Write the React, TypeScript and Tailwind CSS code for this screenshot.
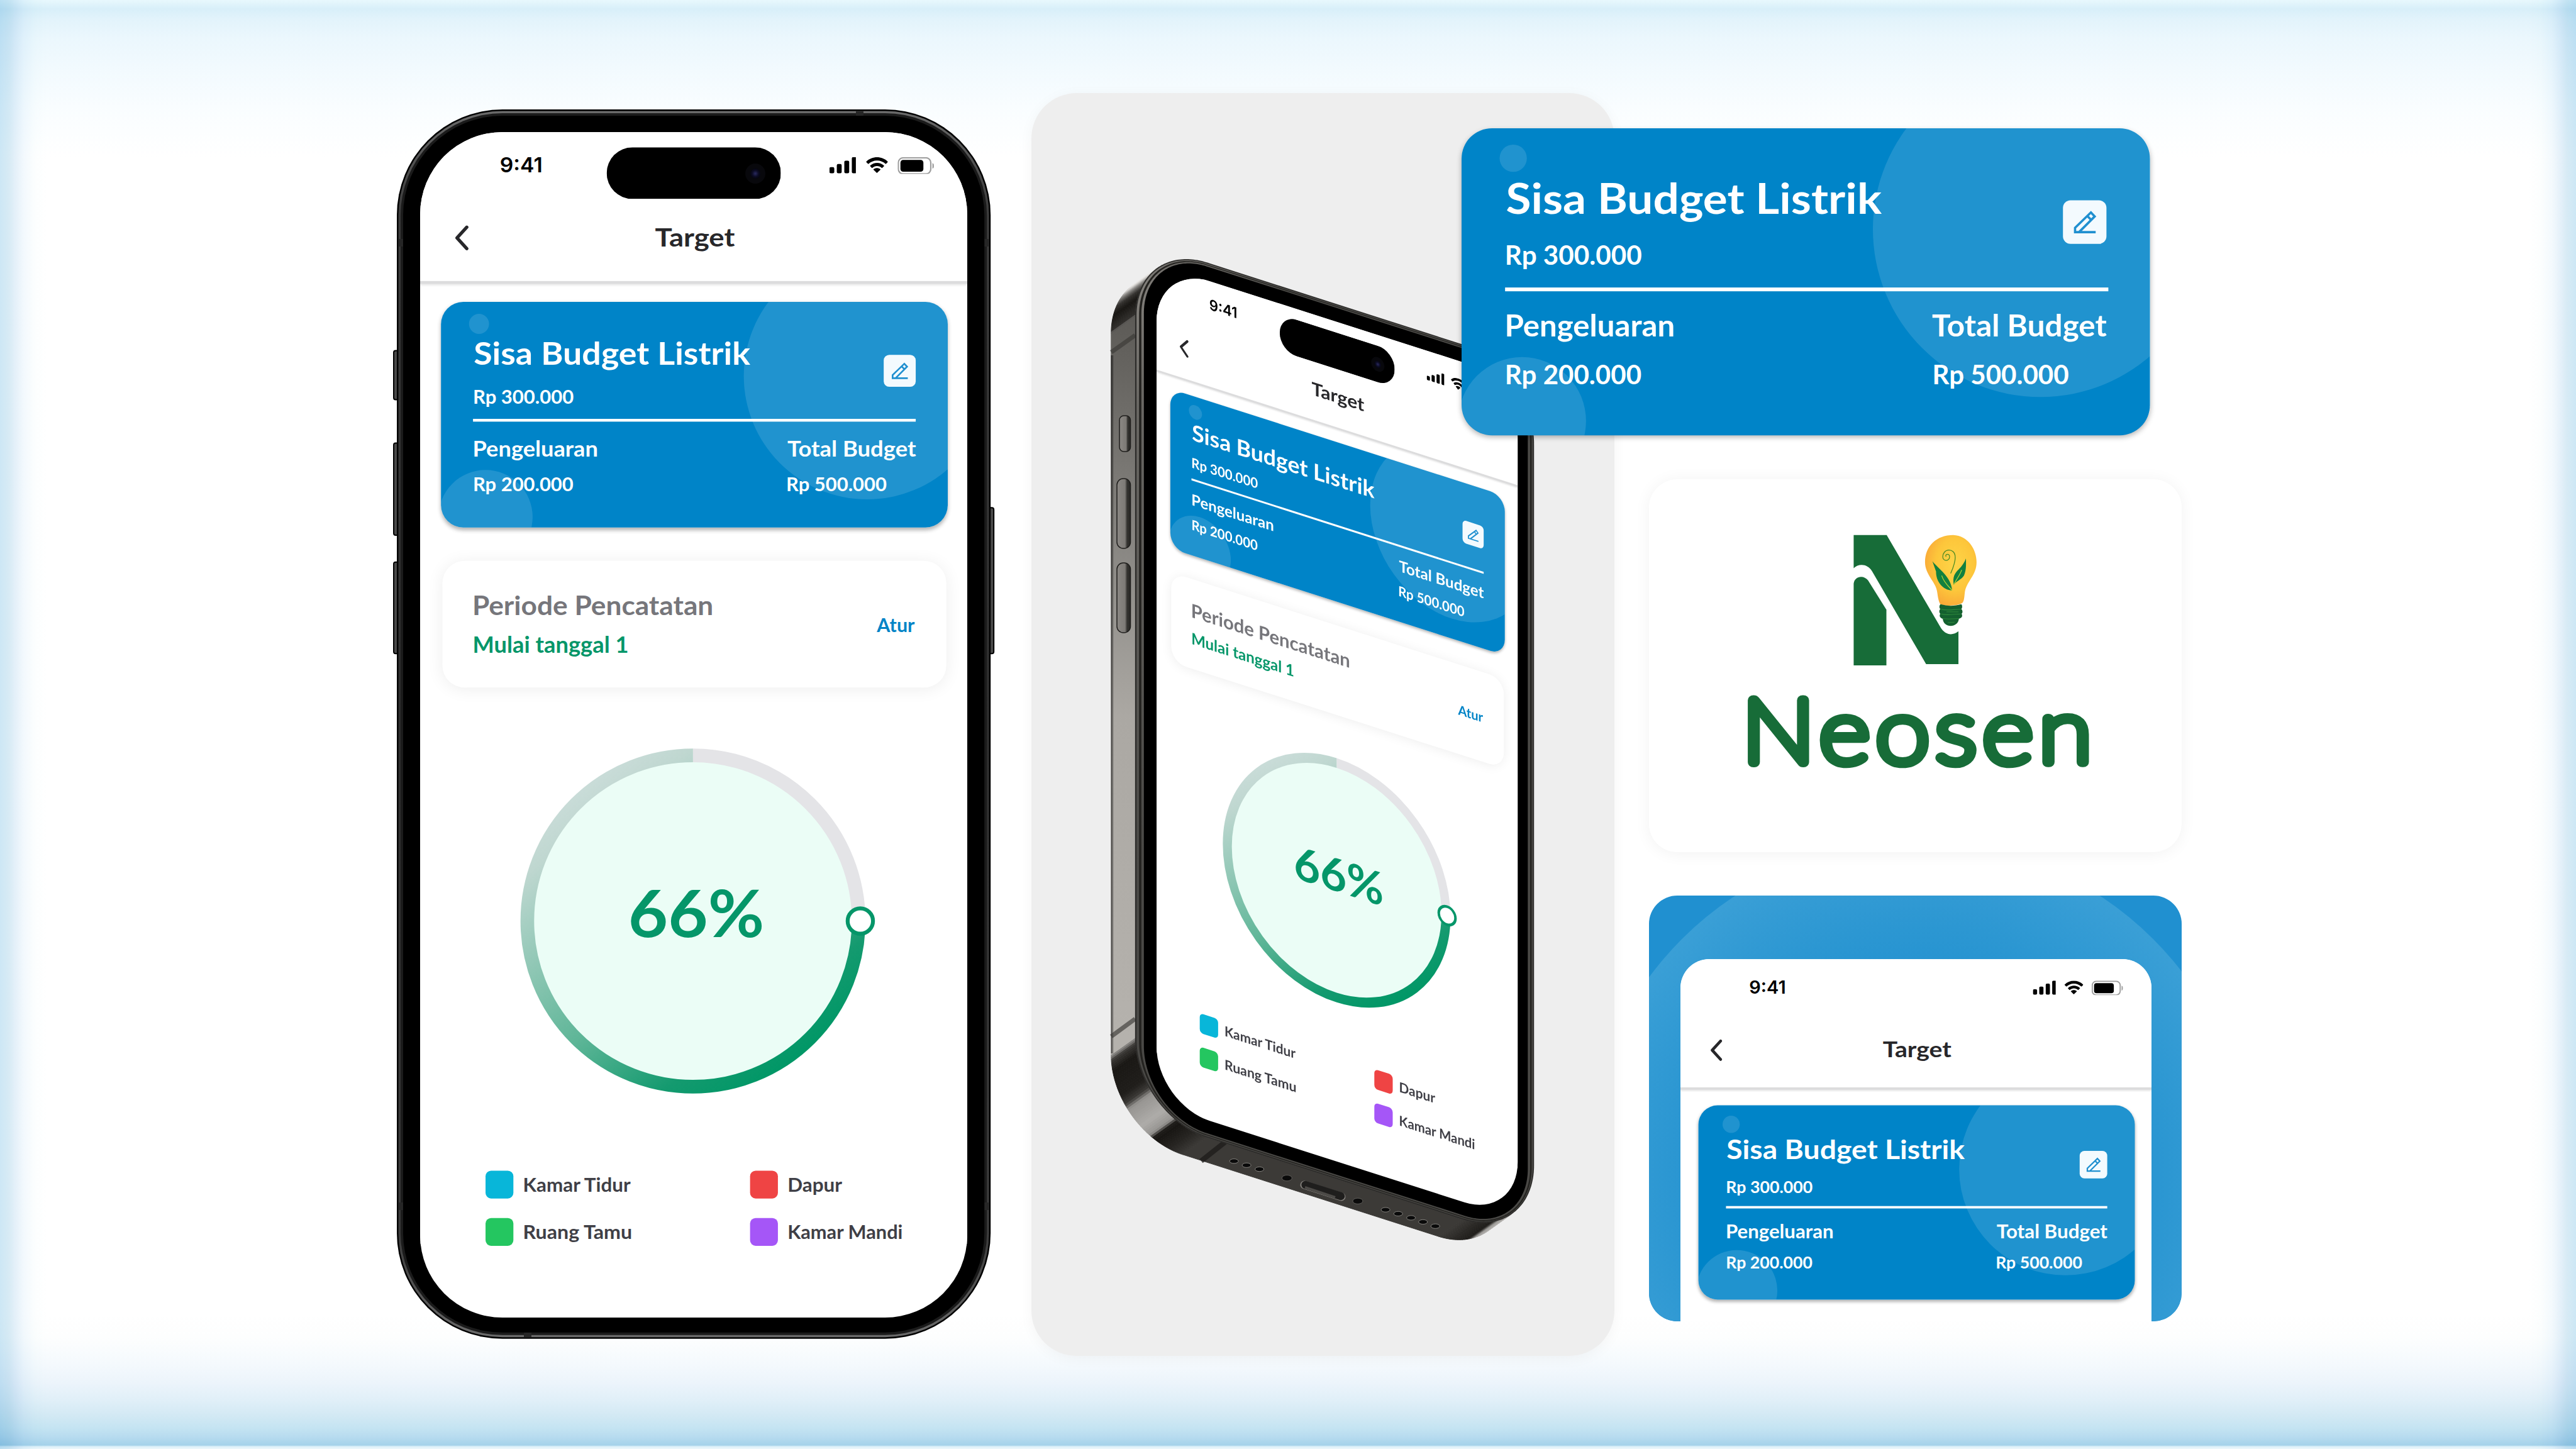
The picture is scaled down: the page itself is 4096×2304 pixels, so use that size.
import { useLayoutEffect, useRef, useState } from "react";

/* A line of text whose ink spans exactly `w` design pixels. */
function Fit({ w, text, className = "" }: { w: number; text: string; className?: string }) {
  const ref = useRef<HTMLSpanElement>(null);
  const [transform, setTransform] = useState("none");
  useLayoutEffect(() => {
    const el = ref.current;
    const ctx = document.createElement("canvas").getContext("2d");
    if (!el || !ctx) return;
    const cs = getComputedStyle(el);
    ctx.font = `${cs.fontWeight} ${parseFloat(cs.fontSize) * 10}px ${cs.fontFamily}`;
    const m = ctx.measureText(text);
    const left = m.actualBoundingBoxLeft / 10;
    const s = w / (left + m.actualBoundingBoxRight / 10);
    setTransform(`translateX(${left * s}px) scaleX(${s})`);
  }, [w, text]);
  return (
    <span ref={ref} className={`block origin-left whitespace-nowrap ${className}`} style={{ width: w, transform }}>
      {text}
    </span>
  );
}

function BudgetCard() {
  return (
    <div className="relative h-[161.7px] w-[364.3px] overflow-hidden rounded-[16px] bg-[#0084c8] pl-[23.2px] pr-[22.7px] pt-[22.6px] text-white">
      <svg viewBox="0 0 364.3 161.7" className="absolute inset-0 h-full w-full" fill="#fff" fillOpacity="0.125">
        <circle cx="27.3" cy="15.8" r="7.2" />
        <circle cx="306.1" cy="53.2" r="88.6" />
        <circle cx="32" cy="154.5" r="33.8" />
      </svg>
      <div className="relative flex items-start justify-between">
        <div className="pl-[0.7px]">
          <Fit w={198.2} text="Sisa Budget Listrik" className="text-[22.5px] font-bold leading-[28px]" />
          <Fit w={71} text="Rp 300.000" className="mt-[7.8px] text-[14px] font-bold leading-[18px]" />
        </div>
        <div className="mr-[0.4px] mt-[15.4px] h-[23px] w-[23px] rounded-[4px] bg-[#f3fafe]">
          <svg viewBox="0 0 23 23" className="h-full w-full" fill="none" stroke="#2090d0" strokeWidth="1.2">
            <path d="M17.3 16.8H6.4V14.5L14.8 6.4L16.8 8.5L8.5 16.8M12.9 8.3L15 10.4" />
          </svg>
        </div>
      </div>
      <div className="relative mt-[7.2px] h-[2px] bg-white" />
      <div className="relative mt-[8.7px] flex justify-between pl-[0.7px]">
        <div>
          <Fit w={88} text="Pengeluaran" className="text-[15.6px] font-bold leading-[20px]" />
          <Fit w={70.8} text="Rp 200.000" className="mt-[7.2px] text-[14px] font-bold leading-[18px]" />
        </div>
        <div>
          <Fit w={92.2} text="Total Budget" className="text-[15.6px] font-bold leading-[20px]" />
          <Fit w={70.8} text="Rp 500.000" className="ml-[0.3px] mt-[7.2px] text-[14px] font-bold leading-[18px]" />
        </div>
      </div>
    </div>
  );
}

function StatusIcons() {
  return (
    <div className="flex h-[18.6px] items-center gap-[6.4px]">
      <svg viewBox="0 0 19.6 11.6" className="h-[11.6px] w-[19.6px]">
        <rect x="0" y="7.2" width="3.5" height="4.4" rx="1" />
        <rect x="5.3" y="4.9" width="3.5" height="6.7" rx="1" />
        <rect x="10.7" y="2.5" width="3.5" height="9.1" rx="1" />
        <rect x="16.1" y="0" width="3.5" height="11.6" rx="1" />
      </svg>
      <svg viewBox="0 0 17 12" className="h-[11.6px] w-[16.4px]">
        <path d="M8.5 2.5c2.4 0 4.6.9 6.3 2.5.1.1.3.1.4 0L16.500 3.700c.1-.1.1-.3 0-.4C12-1 5-1 .5 3.300c-.1.1-.1.3 0 .4L1.800 5c.1.1.3.1.4 0C3.900 3.400 6.100 2.500 8.500 2.500Z" />
        <path d="M8.500 6.600c1.300 0 2.600.5 3.500 1.400.1.1.3.1.4 0l1.300-1.300c.1-.1.1-.3 0-.4-2.900-2.700-7.400-2.700-10.300 0-.1.1-.1.300 0 .4L4.600 8c.1.1.3.1.4 0 1-.9 2.200-1.400 3.500-1.400Z" />
        <path d="M11 9.400c.1-.1.1-.3 0-.4-1.500-1.200-3.600-1.200-5.100 0-.1.1-.1.300 0 .4l2.300 2.300c.1.100.3.100.4 0L11 9.400Z" />
      </svg>
      <svg viewBox="0 0 26.500 12.500" className="h-[12.5px] w-[26.5px]">
        <rect x="0.500" y="0.500" width="23.300" height="11.500" rx="3.400" fill="none" stroke="#000" strokeOpacity="0.38" />
        <rect x="2" y="2" width="16.500" height="8.500" rx="2" />
        <path d="M25 4.200v4.100c.8-.35 1.300-1.150 1.300-2.050S25.800 4.550 25 4.200Z" fillOpacity="0.4" />
      </svg>
    </div>
  );
}

function Ring() {
  return (
    <div className="relative ml-[72.1px] mt-[43.2px] flex h-[248px] w-[248px] justify-center pl-[4px] pt-[88.9px]">
      <svg viewBox="0 0 248 248" className="absolute inset-0 h-full w-full overflow-visible">
        <defs>
          <linearGradient id="ringFade" gradientUnits="userSpaceOnUse" x1="49.600" y1="24.800" x2="198.400" y2="223.200">
            <stop offset="0" stopColor="#c9dcd8" />
            <stop offset="0.1" stopColor="#bfd7d0" />
            <stop offset="0.2" stopColor="#a9d0c4" />
            <stop offset="0.57" stopColor="#5fb698" />
            <stop offset="0.84" stopColor="#149a6f" />
            <stop offset="1" stopColor="#009766" />
          </linearGradient>
        </defs>
        <circle cx="124" cy="123.700" r="115" fill="#ebfdf6" />
        <path d="M124 4.700A119 119 0 0 1 243 123.700" fill="none" stroke="#e4e4e7" strokeWidth="9.800" />
        <path d="M243 123.700A119 119 0 1 1 124 4.700" fill="none" stroke="url(#ringFade)" strokeWidth="9.800" />
        <circle cx="244.200" cy="123.700" r="9.100" fill="#fff" stroke="#059669" strokeWidth="2.800" />
      </svg>
      <Fit w={94.3} text="66%" className="relative text-[46.5px] font-bold leading-[56px] text-[#059669]" />
    </div>
  );
}

const legend = [
  { name: "Kamar Tidur", w: 76.9, color: "bg-[#08b6d9]" },
  { name: "Dapur", w: 38.1, color: "bg-[#ef4444]" },
  { name: "Ruang Tamu", w: 76.9, color: "bg-[#24c660]" },
  { name: "Kamar Mandi", w: 81.3, color: "bg-[#a556f7]" },
];

function Screen({ island = true, body = true }: { island?: boolean; body?: boolean }) {
  return (
    <div className="relative w-[393px] bg-white font-[Lato,sans-serif]">
      {island && (
        <svg viewBox="0 0 125.2 37" className="absolute left-[134px] top-[11.1px] h-[37px] w-[125.2px]">
          <defs>
            <radialGradient id="lens">
              <stop offset="0" stopColor="#2a2a60" />
              <stop offset="0.6" stopColor="#0c0c24" />
              <stop offset="1" stopColor="#050510" />
            </radialGradient>
          </defs>
          <rect width="125.2" height="37" rx="18.5" />
          <circle cx="106.8" cy="18.8" r="7.2" fill="#08080c" />
          <circle cx="106.8" cy="18.8" r="3.7" fill="url(#lens)" />
        </svg>
      )}
      <div className="flex h-[54px] items-start justify-between pl-[57.6px] pr-[23.9px] pt-[14.6px]">
        <Fit w={28.9} text="9:41" className="font-[Inter,sans-serif] text-[15px] font-semibold leading-[18px] text-black" />
        <StatusIcons />
      </div>
      <div className="grid h-[53px] grid-cols-[1fr_auto_1fr] items-start pt-[8.8px]">
        <svg viewBox="0 0 10 18" className="ml-[25.4px] mt-[4px] h-[18px] w-[10px]" fill="none" stroke="#27272a" strokeWidth="2.400" strokeLinecap="round" strokeLinejoin="round">
          <path d="M8.500 1.300L1.500 9L8.500 16.700" />
        </svg>
        <Fit w={57} text="Target" className="ml-[2px] text-[18.2px] font-bold leading-[24px] text-[#27272a]" />
      </div>
      <div className="h-[1.5px] bg-[#dcdcdd] shadow-[0_1px_1.5px_rgba(0,0,0,0.1)]" />
      <div className="mt-[13.8px] flex flex-col items-center pr-[0.2px] pl-[1px]">
        <div className="rounded-[16px] shadow-[0_1.5px_3px_rgba(0,0,0,0.3)]">
          <BudgetCard />
        </div>
        {body && (
          <div className="mt-[23.9px] flex h-[91.6px] w-[362.3px] items-start justify-between rounded-[16px] bg-white pl-[23px] pr-[22.4px] shadow-[0_1px_12px_rgba(0,0,0,0.07)]">
            <div className="pt-[19px]">
              <Fit w={170.8} text="Periode Pencatatan" className="text-[19.3px] font-bold leading-[26px] text-[#76767b]" />
              <Fit w={109.8} text="Mulai tanggal 1" className="mt-[4.5px] text-[16px] font-bold leading-[22px] text-[#059669]" />
            </div>
            <Fit w={27.3} text="Atur" className="mt-[36.7px] text-[13.6px] font-bold leading-[18px] text-[#0284c7]" />
          </div>
        )}
      </div>
      {body && <Ring />}
      {body && (
        <div className="ml-[47.1px] mt-[55.6px] grid grid-cols-[190px_120px] gap-y-[14.8px]">
          {legend.map((l) => (
            <div key={l.name} className="flex h-[19.4px] items-start gap-[8.3px]">
              <div className={`h-[19.4px] w-[19.6px] rounded-[4px] ${l.color}`} />
              <Fit w={l.w} text={l.name} className="mt-[0.5px] text-[14px] font-bold leading-[18px] text-[#3f3f46]" />
            </div>
          ))}
        </div>
      )}
    </div>
  );
}

function FrontPhone() {
  return (
    <div className="relative mt-[174.2px] h-[1954.8px] w-[944.2px] shrink-0">
      <svg viewBox="0 0 944.2 1954.8" className="absolute inset-0 h-full w-full overflow-visible">
        <defs>
          <linearGradient id="band" x1="0" y1="0" x2="0" y2="1">
            <stop offset="0" stopColor="#6a6a6a" />
            <stop offset="0.08" stopColor="#3c3c3c" />
            <stop offset="0.5" stopColor="#2e2e2e" />
            <stop offset="0.92" stopColor="#3c3c3c" />
            <stop offset="1" stopColor="#6a6a6a" />
          </linearGradient>
        </defs>
        <g fill="#4a4a4a" stroke="#000" strokeWidth="2">
          <rect x="-5" y="383.600" width="12" height="78" rx="3" />
          <rect x="-5" y="530.400" width="12" height="146.500" rx="3" />
          <rect x="-5" y="719.800" width="12" height="145.500" rx="3" />
          <rect x="937.200" y="633.200" width="12" height="232" rx="3" />
        </g>
        <rect width="944.200" height="1954.800" rx="168" fill="#000" />
        <rect x="2.500" y="2.500" width="939.200" height="1949.800" rx="165.500" fill="url(#band)" />
        <rect x="6" y="6" width="932.200" height="1942.800" rx="162" fill="#1b1b1b" />
        <path d="M2.500 212H10M934.200 212H941.700M2.500 1744H10M934.200 1744H941.700M736 2.500V10M208 1944.800V1952.300" stroke="#262626" strokeWidth="12" />
        <rect x="10" y="10" width="924.200" height="1934.800" rx="158" fill="#000" />
      </svg>
      <div className="relative px-[37.1px] pt-[35.6px]">
        <div className="h-[1885px] w-[870px] overflow-hidden rounded-[131px] bg-white">
          <div className="origin-top-left scale-[2.2137]">
            <Screen />
          </div>
        </div>
      </div>
    </div>
  );
}

/* ---- Tilted phone: a sheared rounded slab, extruded towards the lower left ---- */
type P = { x: number; y: number; a: number };
const DEPTH = { x: -38, y: 27 };

function slab(x0: number, y0: number, x1: number, y1: number, r: number): P[] {
  const out: P[] = [];
  const corners: [number, number, number][] = [
    [x1 - r, y0 + r, 270],
    [x1 - r, y1 - r, 0],
    [x0 + r, y1 - r, 90],
    [x0 + r, y0 + r, 180],
  ];
  for (const [cx, cy, start] of corners) {
    for (let i = 0; i <= 60; i++) {
      const a = start + i * 1.5;
      const t = (a * Math.PI) / 180;
      const x = cx + r * Math.cos(t);
      const y = cy + r * Math.sin(t);
      out.push({ x: 1.4611 * x, y: 0.4678 * x + 1.567 * y, a: a % 360 });
    }
  }
  return out;
}
const pts = (ps: P[]) => ps.map((p) => `${p.x.toFixed(2)},${p.y.toFixed(2)}`).join(" ");

/* Brightness of the side wall by the direction it faces, in degrees. */
const METAL: [number, number][] = [
  [0, 225], [40, 208], [60, 160], [66, 30], [78, 42], [90, 60], [100, 40], [112, 24], [115, 32], [118, 150],
  [126, 174], [140, 150], [144, 60], [150, 32], [168, 26], [176, 60], [179, 140], [182, 50], [194, 24], [202, 52],
  [210, 130], [217, 205], [226, 235], [250, 190], [360, 60],
];
function metal(a: number) {
  for (let i = 1; i < METAL.length; i++) {
    const [a1, v1] = METAL[i];
    const [a0, v0] = METAL[i - 1];
    if (a <= a1) {
      const v = Math.round(v0 + ((v1 - v0) * (a - a0)) / (a1 - a0));
      return `rgb(${v},${Math.max(0, v - 2)},${Math.max(0, v - 5)})`;
    }
  }
  return "#333";
}

const front = slab(-23.4, -18, 410.8, 870, 78);
const rimA = slab(-21.8, -17, 409.6, 868.6, 76);
const rimB = slab(-19, -16, 408.2, 867.8, 73);
const rimC = slab(-16.5, -15.2, 406.5, 866.8, 71);
const bezel = slab(-13.8, -14, 404, 865.5, 68);

const holes = [[475, 991], [518, 1016], [562, 1040], [993, 1287], [1036, 1311], [1080, 1336], [1121, 1361], [1163, 1387]];
const screws = [[656, 1094], [898, 1234]];
const onBase = ([x, y]: number[]) => [x * 0.465306 - 97.9, y * 0.261224 + 1167.4];

function TiltedPhone() {
  const walls = front.map((p, i) => {
    const q = front[(i + 1) % front.length];
    const facing = (q.y - p.y) * DEPTH.x - (q.x - p.x) * DEPTH.y;
    if (facing <= 0) return null;
    const flatLeft = p.a === 180 && q.a === 180;
    const fill = flatLeft ? "url(#side)" : metal(p.a === 90 && q.a === 90 ? 90 : (p.a + q.a) / 2);
    const d = `${p.x},${p.y} ${q.x},${q.y} ${q.x + DEPTH.x},${q.y + DEPTH.y} ${p.x + DEPTH.x},${p.y + DEPTH.y}`;
    return <polygon key={i} points={d} fill={fill} stroke={fill} strokeWidth="1" />;
  });
  return (
    <div className="absolute left-[198.4px] top-[272.1px]">
      <svg className="absolute left-0 top-0 h-px w-px overflow-visible">
        <defs>
          <linearGradient id="side" gradientUnits="userSpaceOnUse" x1="0" y1="90" x2="0" y2="1230">
            <stop offset="0" stopColor="#5d5b57" />
            <stop offset="0.25" stopColor="#7f7d79" />
            <stop offset="0.55" stopColor="#aba8a3" />
            <stop offset="1" stopColor="#b5b2ad" />
          </linearGradient>
          <linearGradient id="rim" gradientUnits="userSpaceOnUse" x1="-35" y1="0" x2="200" y2="60">
            <stop offset="0" stopColor="#8e8b86" />
            <stop offset="0.25" stopColor="#6a6864" />
            <stop offset="1" stopColor="#4a4946" />
          </linearGradient>
          <linearGradient id="key" x1="0" y1="0" x2="1" y2="0">
            <stop offset="0" stopColor="#8b8884" />
            <stop offset="0.6" stopColor="#7d7a76" />
            <stop offset="0.75" stopColor="#33322f" />
            <stop offset="1" stopColor="#2a2927" />
          </linearGradient>
          <linearGradient id="edge" x1="0" y1="0" x2="1" y2="0">
            <stop offset="0" stopColor="#000" stopOpacity="0.7" />
            <stop offset="1" stopColor="#000" stopOpacity="0" />
          </linearGradient>
        </defs>
        {walls}
        <rect x="-72.300" y="145" width="4.500" height="1110" fill="url(#edge)" />
        {/* antenna breaks */}
        <path d="M-34 113L-72 140M-34 1200L-72 1228" stroke="#3a3936" strokeOpacity="0.65" strokeWidth="7" />
        <path d="M109 1396L71 1426" stroke="#1c1b1a" strokeOpacity="0.75" strokeWidth="8" />
        {/* side keys */}
        <g stroke="#1f1e1c" strokeWidth="1.500" fill="url(#key)">
          <rect x="-59" y="241" width="17.500" height="57" rx="7" />
          <rect x="-63" y="341" width="21.500" height="111" rx="10" />
          <rect x="-63" y="475" width="21.500" height="111" rx="10" />
        </g>
        {/* ports */}
        {holes.map((h) => {
          const [x, y] = onBase(h);
          return <ellipse key={h[0]} cx={x} cy={y} rx="7" ry="3.600" fill="#0a0a0a" stroke="#8d8b87" strokeWidth="0.900" />;
        })}
        {screws.map((h) => {
          const [x, y] = onBase(h);
          return <ellipse key={h[0]} cx={x} cy={y} rx="8" ry="4.600" fill="#0a0a0a" stroke="#6d6b67" strokeWidth="0.800" />;
        })}
        <path d="M235 1464L294 1483" stroke="#85827e" strokeWidth="13" strokeLinecap="round" />
        <path d="M236.500 1464L293 1482" stroke="#1f1e1d" strokeWidth="12.500" strokeLinecap="round" />
        <path d="M236 1468L284 1484" stroke="#4c4a47" strokeWidth="4" />
        <polygon points={pts(front)} fill="#2c2b29" />
        <polygon points={pts(rimA)} fill="url(#rim)" />
        <polygon points={pts(rimB)} fill="#23221f" />
        <polygon points={pts(rimC)} fill="url(#rim)" />
        <polygon points={pts(bezel)} fill="#000" />
      </svg>
      <div className="h-[852px] w-[393px] origin-top-left overflow-hidden rounded-[58px] bg-white [transform:matrix(1.4611,0.4678,0,1.567,0,0)]">
        <Screen />
      </div>
    </div>
  );
}

function NeosenCard() {
  return (
    <div className="relative mt-[70.7px] h-[593px] w-full rounded-[45px] bg-white shadow-[0_2px_26px_rgba(0,0,0,0.055)]">
      <svg viewBox="0 0 846.3 593" className="h-full w-full">
        <defs>
          <radialGradient id="glass" cx="0.58" cy="0.42" r="0.62">
            <stop offset="0" stopColor="#fed548" />
            <stop offset="0.6" stopColor="#fdc63b" />
            <stop offset="1" stopColor="#f9a838" />
          </radialGradient>
        </defs>
        <g transform="translate(283.2 70) scale(0.21333)">
          <path d="M198 88H444L845 775C880 835 935 840 979 805V1050H738L335 358C300 300 235 300 198 335Z" fill="#176c38" />
          <path d="M198 1059V450C205 390 275 385 305 425L442 645V1059Z" fill="#176c38" />
          <path d="M820 510C812 440 730 385 730 290C730 170 815 88 940 88C1050 92 1114 195 1114 290C1114 385 1045 430 1028 505C1022 540 1025 570 1010 592C985 618 865 620 843 602C828 575 826 545 820 510Z" fill="url(#glass)" />
          <path d="M922 372C940 330 955 290 955 255C955 215 930 200 908 200C880 200 862 225 862 250C862 268 875 277 888 277C902 277 913 265 913 250C913 238 905 231 897 231C888 231 881 240 886 247" fill="none" stroke="#4b8b24" strokeWidth="6" strokeLinecap="round" />
          <path d="M785 284C830 340 925 400 932 500C860 500 810 430 812 360Z" fill="#12803f" />
          <path d="M1035 262C1035 300 1040 345 1020 390C1000 420 965 430 944 458C935 400 950 375 980 345C1005 320 1025 290 1035 262Z" fill="#12803f" />
          <path d="M855 392C870 440 900 465 930 498M1002 350C990 390 960 420 947 455" fill="none" stroke="#b5d334" strokeWidth="6" strokeLinecap="round" />
          <path d="M846 604C900 620 950 618 1000 604C1010 612 1008 635 1000 640C1012 650 1012 668 1002 675C1010 684 1008 704 992 708L982 712C980 745 950 765 922 765C890 765 865 745 862 712C840 706 834 688 844 675C834 665 834 648 844 640C834 630 836 612 846 604Z" fill="#14602f" />
          <path d="M850 641C900 655 950 640 998 641M850 676C900 690 950 675 998 676M862 710C900 718 950 712 984 710" fill="none" stroke="#2f8a3c" strokeWidth="5" />
          <path d="M890 660H980M900 740L950 738" stroke="#3c9a45" strokeOpacity="0.6" strokeWidth="6" />
        </g>
        <text
          x="148"
          y="450.300"
          textLength="566"
          lengthAdjust="spacingAndGlyphs"
          letterSpacing="9"
          fontFamily="Lato, sans-serif"
          fontWeight="100"
          fontSize="140"
          fill="#176c38"
          stroke="#176c38"
          strokeWidth="16"
          strokeLinejoin="round"
          strokeLinecap="round"
        >
          Neosen
        </text>
      </svg>
    </div>
  );
}

function HeaderPreview() {
  return (
    <div className="relative mt-[69px] flex h-[677px] w-full justify-center overflow-hidden rounded-[45px] bg-[#2090d0]">
      <svg viewBox="0 0 846.3 677" className="absolute inset-0 h-full w-full">
        <defs>
          <radialGradient id="halo">
            <stop offset="0.5" stopColor="#2090d0" />
            <stop offset="0.75" stopColor="#2c97d2" />
            <stop offset="1" stopColor="#3a9fd6" />
          </radialGradient>
        </defs>
        <circle cx="427" cy="444" r="530" fill="url(#halo)" />
      </svg>
      <div className="relative mr-[-2px] mt-[101px] h-[576px] w-[749.2px] overflow-hidden rounded-t-[46px] bg-white">
        <div className="origin-top-left scale-[1.9063]">
          <Screen island={false} body={false} />
        </div>
      </div>
    </div>
  );
}

export default function App() {
  return (
    <main className="relative flex h-[2304px] w-[4096px] items-start overflow-hidden bg-white pl-[630.7px] font-[Lato,sans-serif]">
      <div className="absolute inset-0 bg-[linear-gradient(180deg,#e8f8fd_0px,#d8eff9_14px,#e2f3fb_30px,#ebf7fd_60px,#f2fafe_110px,#f9fdff_170px,#fff_250px,#fff_2090px,#fdfefe_2127px,#f4f9fd_2170px,#ecf4fb_2199px,#e0eff8_2227px,#d3e9f4_2250px,#c5e4f2_2270px,#b7dbef_2285px,#a4d2ea_2298px,#dceff8_2300px,#eef8fc_2304px)]" />
      <div className="absolute inset-0 bg-[linear-gradient(90deg,#cde7f5_0px,#d8ebf5_15px,#e4f0f9_24px,#f3f9fd_38px,#fcfefe_56px,#fff_74px,#fff_4022px,#fcfefe_4040px,#f3f9fd_4058px,#e4f0f9_4072px,#d8ebf5_4081px,#cde7f5_4096px)] mix-blend-multiply" />
      <FrontPhone />
      <div className="relative ml-[65.4px] mt-[147.7px] h-[2008.7px] w-[926.3px] shrink-0 rounded-[72px] bg-[#eeeeee] shadow-[0_4px_22px_rgba(0,0,0,0.045)]">
        <TiltedPhone />
      </div>
      <div className="relative ml-[55.8px] w-[846.3px] shrink-0 pt-[204px]">
        <div className="ml-[-298.6px] h-[487.3px] w-[1095.5px] rounded-[48px] shadow-[0_4px_9px_rgba(0,0,0,0.3)]">
          <div className="origin-top-left [transform:scale(3.007,3.0136)]">
            <BudgetCard />
          </div>
        </div>
        <NeosenCard />
        <HeaderPreview />
      </div>
    </main>
  );
}
